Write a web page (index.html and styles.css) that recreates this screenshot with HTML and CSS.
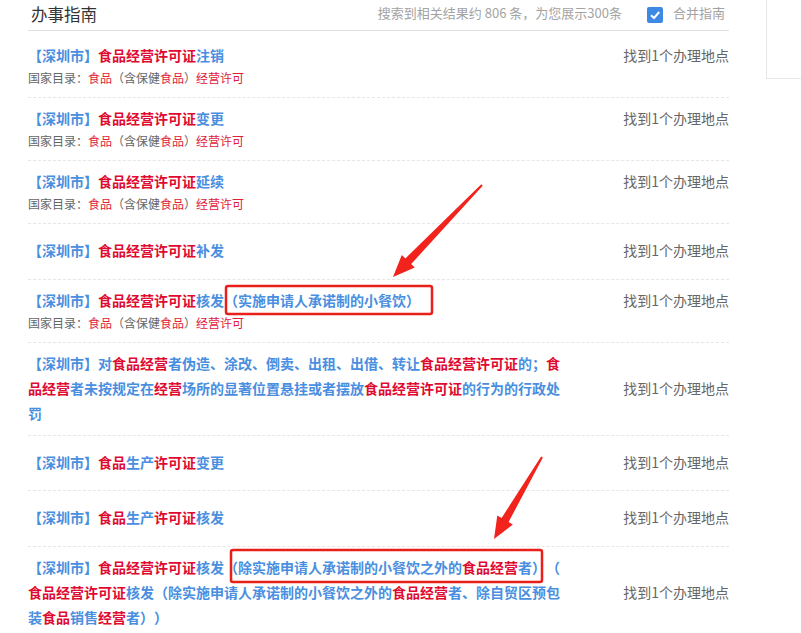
FILE: index.html
```html
<!DOCTYPE html>
<html lang="zh-CN">
<head>
<meta charset="utf-8">
<title>办事指南</title>
<link rel="stylesheet" href="styles.css">
</head>
<body>
<div class="page">
  <div class="main">
    <div class="head">
      <div class="head-title">办事指南</div>
      <div class="head-right">
        <span class="count">搜索到相关结果约 806 条，为您展示300条</span>
        <span class="check"><svg viewBox="0 0 16 16" width="16" height="16"><rect x="0" y="0" width="16" height="16" rx="2" fill="#3d8ae5"/><path d="M4 8.3 L7 11 L12.2 5" fill="none" stroke="#fff" stroke-width="2"/></svg></span>
        <span class="merge">合并指南</span>
      </div>
    </div>

    <div class="item">
      <div class="title"><span class="b">【深圳市】</span><span class="r">食品经营许可证</span><span class="b">注销</span></div>
      <div class="where">找到1个办理地点</div>
      <div class="sub">国家目录：<span class="r">食品</span>（含保健<span class="r">食品</span>）<span class="r">经营许可</span></div>
    </div>

    <div class="item">
      <div class="title"><span class="b">【深圳市】</span><span class="r">食品经营许可证</span><span class="b">变更</span></div>
      <div class="where">找到1个办理地点</div>
      <div class="sub">国家目录：<span class="r">食品</span>（含保健<span class="r">食品</span>）<span class="r">经营许可</span></div>
    </div>

    <div class="item">
      <div class="title"><span class="b">【深圳市】</span><span class="r">食品经营许可证</span><span class="b">延续</span></div>
      <div class="where">找到1个办理地点</div>
      <div class="sub">国家目录：<span class="r">食品</span>（含保健<span class="r">食品</span>）<span class="r">经营许可</span></div>
    </div>

    <div class="item">
      <div class="title"><span class="b">【深圳市】</span><span class="r">食品经营许可证</span><span class="b">补发</span></div>
      <div class="where">找到1个办理地点</div>
    </div>

    <div class="item">
      <div class="title"><span class="b">【深圳市】</span><span class="r">食品经营许可证</span><span class="b">核发（实施申请人承诺制的小餐饮）</span></div>
      <div class="where">找到1个办理地点</div>
      <div class="sub">国家目录：<span class="r">食品</span>（含保健<span class="r">食品</span>）<span class="r">经营许可</span></div>
    </div>

    <div class="item">
      <div class="title"><span class="b">【深圳市】对</span><span class="r">食品经营</span><span class="b">者伪造、涂改、倒卖、出租、出借、转让</span><span class="r">食品经营许可证</span><span class="b">的；</span><span class="r">食</span><br><span class="r">品经营</span><span class="b">者未按规定在</span><span class="r">经营</span><span class="b">场所的显著位置悬挂或者摆放</span><span class="r">食品经营许可证</span><span class="b">的行为的行政处</span><br><span class="b">罚</span></div>
      <div class="where">找到1个办理地点</div>
    </div>

    <div class="item">
      <div class="title"><span class="b">【深圳市】</span><span class="r">食品</span><span class="b">生产</span><span class="r">许可证</span><span class="b">变更</span></div>
      <div class="where">找到1个办理地点</div>
    </div>

    <div class="item">
      <div class="title"><span class="b">【深圳市】</span><span class="r">食品</span><span class="b">生产</span><span class="r">许可证</span><span class="b">核发</span></div>
      <div class="where">找到1个办理地点</div>
    </div>

    <div class="item">
      <div class="title"><span class="b">【深圳市】</span><span class="r">食品经营许可证</span><span class="b">核发（除实施申请人承诺制的小餐饮之外的</span><span class="r">食品经营</span><span class="b">者）（</span><br><span class="r">食品经营许可证</span><span class="b">核发（除实施申请人承诺制的小餐饮之外的</span><span class="r">食品经营</span><span class="b">者、除自贸区预包</span><br><span class="b">装</span><span class="r">食品</span><span class="b">销售</span><span class="r">经营</span><span class="b">者））</span></div>
      <div class="where">找到1个办理地点</div>
    </div>
  </div>
  <div class="aside"></div>
</div>

<svg class="marks" width="801" height="633" viewBox="0 0 801 633">
  <rect x="226" y="286" width="206" height="28" rx="2" fill="none" stroke="#ea1f1a" stroke-width="2.5"/>
  <rect x="231" y="550" width="311" height="32" rx="2" fill="none" stroke="#ea1f1a" stroke-width="2.5"/>
  <polygon fill="#f2231c" points="482.7,185.7 411.2,264.0 414.8,267.5 393,277 401.8,254.9 405.4,258.4 481.3,184.3"/>
  <polygon fill="#f2231c" points="542.9,457.5 508.6,522.0 512.9,524.5 494,539 497.3,515.5 501.6,518.0 541.1,456.5"/>
</svg>
</body>
</html>
```

FILE: styles.css
```css
html, body {
  margin: 0;
  padding: 0;
  background: #fff;
}

body {
  font-family: "Noto Sans CJK SC", "Microsoft YaHei", sans-serif;
  color: #666;
  text-spacing-trim: space-all;
}

.page {
  display: flex;
  align-items: flex-start;
}

.main {
  margin-left: 28px;
  width: 701px;
}

.aside {
  margin-left: 37px;
  flex: 1;
  height: 78px;
  border-left: 1px solid #e6e6e6;
  border-bottom: 1px solid #e6e6e6;
}

.head {
  display: flex;
  align-items: center;
  height: 30px;
  border-bottom: 1px solid #e2e2e2;
  margin-bottom: 4px;
}

.head-title {
  margin-left: 3px;
  font-size: 16.5px;
  line-height: 26px;
  color: #333;
  margin-top: -2px;
}

.head-right {
  margin-left: auto;
  display: flex;
  align-items: center;
  padding-right: 4px;
  margin-top: -6px;
  font-size: 13px;
  color: #a3a3a3;
}

.check {
  display: inline-flex;
  margin-left: 25px;
  margin-right: 10px;
  margin-top: 5px;
}

.item {
  display: grid;
  grid-template-columns: 534px 1fr;
  align-content: center;
  align-items: center;
  min-height: 37.6px;
  padding: 8px 0 9px;
  border-bottom: 1px dashed #e6e6e6;
}

.item:last-child {
  border-bottom: none;
}

.title {
  grid-column: 1;
  grid-row: 1;
  font-size: 14px;
  line-height: 25px;
  font-weight: bold;
  text-spacing-trim: space-all;
}

.where {
  grid-column: 2;
  grid-row: 1;
  justify-self: end;
  font-size: 14px;
  line-height: 25px;
  color: #666;
}

.sub {
  grid-column: 1 / span 2;
  grid-row: 2;
  font-size: 12px;
  line-height: 20px;
  color: #666;
}

.b {
  color: #4a8fdf;
}

.r {
  color: #df0a30;
}

.sub .r {
  color: #e0203a;
}

.marks {
  position: absolute;
  left: 0;
  top: 0;
  pointer-events: none;
}
```
